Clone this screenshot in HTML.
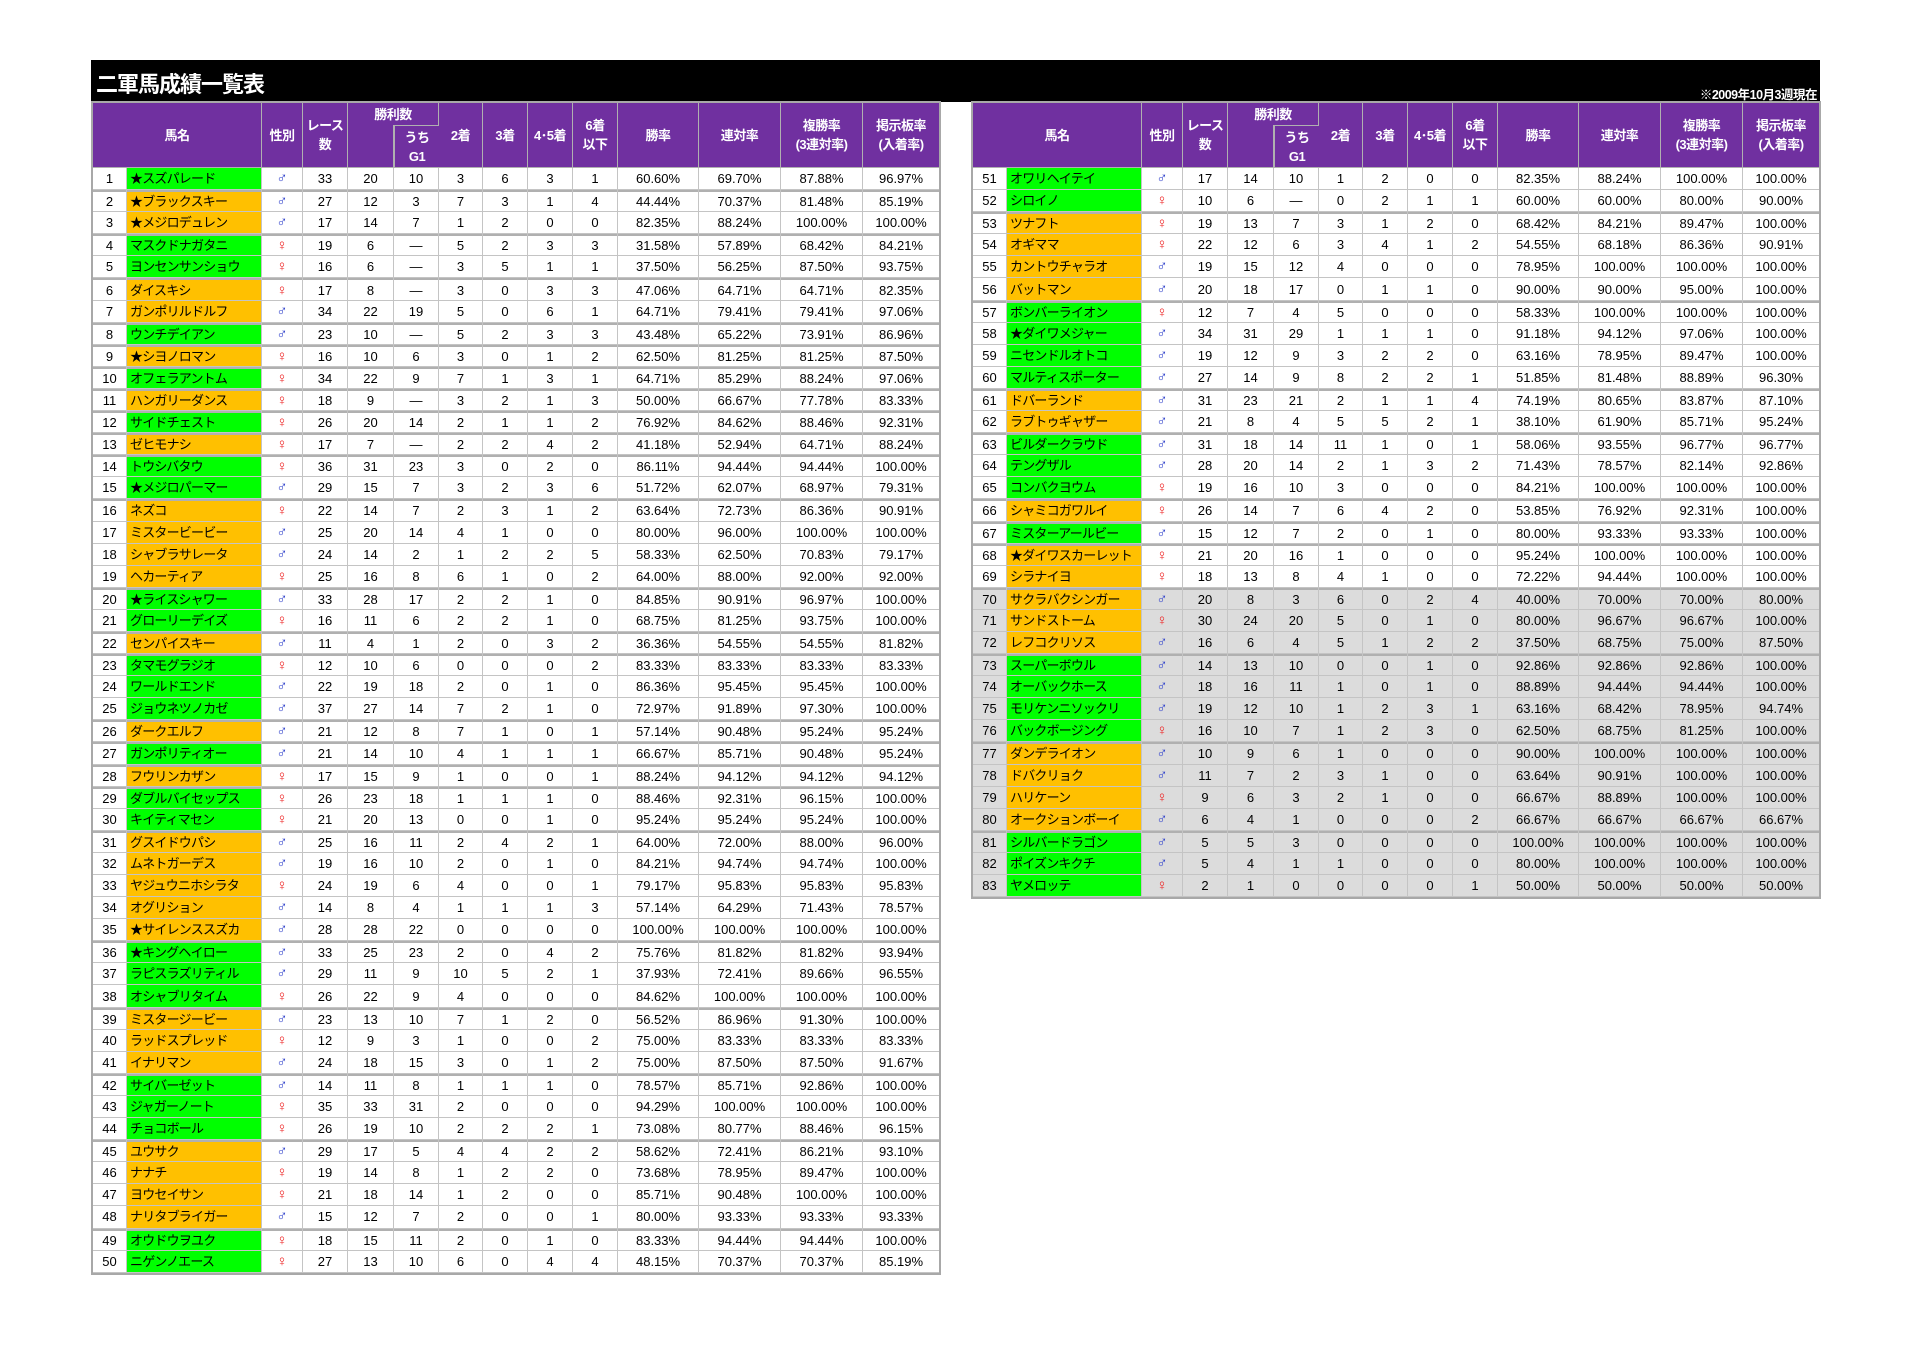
<!DOCTYPE html>
<html><head><meta charset="utf-8">
<style>
body{margin:0;width:1913px;height:1352px;background:#fff;position:relative;font-family:"Liberation Sans","Noto Sans CJK JP",sans-serif;overflow:hidden}
#bar{position:absolute;left:91px;top:60px;width:1729px;height:42px;background:#000}
#title{position:absolute;left:96px;top:67px;color:#fff;font-size:22px;font-weight:bold;letter-spacing:-1px}
#date{position:absolute;right:96px;top:84px;color:#fff;font-size:12.5px;font-weight:bold;letter-spacing:-0.5px}
table{position:absolute;top:101px;border-collapse:separate;border-spacing:0;table-layout:fixed;width:850px;font-size:13px;border:2px solid #a8a8a8}
td{border-right:1px solid #c4c4c4;border-bottom:1px solid #c4c4c4;text-align:center;padding:0;white-space:nowrap;overflow:hidden;box-sizing:border-box;height:22.1px;line-height:17px}
td:last-child{border-right:none}
thead td{background:#7030a0;color:#fff;font-weight:bold;font-size:13px;line-height:19px;border-color:#b0b0b0;letter-spacing:-0.5px;height:22px}
thead tr.b td{height:43px}
tbody tr.t td{box-shadow:inset 0 2px 0 #b0b0b0;padding-top:2px}
td.n{text-align:left;padding-left:3px;font-size:13px;letter-spacing:-0.8px}
.g{background:#00ff00}.o{background:#ffc000}
.m{color:#3344cc;font-size:15px}.f{color:#ee2222;font-size:15px}
tr.z td{background:#dcdcdc}tr.z td.g{background:#00ff00}tr.z td.o{background:#ffc000}
</style></head><body>
<div id="bar"></div>
<div id="title">二軍馬成績一覧表</div>
<div id="date">※2009年10月3週現在</div>

<table style="left:91px">
<colgroup><col style="width:34px"><col style="width:135px"><col style="width:41px"><col style="width:45px"><col style="width:46px"><col style="width:45px"><col style="width:44px"><col style="width:45px"><col style="width:45px"><col style="width:45px"><col style="width:81px"><col style="width:82px"><col style="width:82px"><col style="width:76px"></colgroup>
<thead>
<tr class="a"><td colspan="2" rowspan="2">馬名</td><td rowspan="2">性別</td><td rowspan="2">レース<br>数</td><td colspan="2" style="border-bottom:none">勝利数</td><td rowspan="2">2着</td><td rowspan="2">3着</td><td rowspan="2">4･5着</td><td rowspan="2">6着<br>以下</td><td rowspan="2">勝率</td><td rowspan="2">連対率</td><td rowspan="2">複勝率<br>(3連対率)</td><td rowspan="2">掲示板率<br>(入着率)</td></tr>
<tr class="b"><td style="border-top:none"></td><td style="border-top:1px solid #b0b0b0;border-left:1px solid #b0b0b0">うち<br>G1</td></tr>
</thead>
<tbody>
<tr><td>1</td><td class="n g">★スズパレード</td><td class="m">♂</td><td>33</td><td>20</td><td>10</td><td>3</td><td>6</td><td>3</td><td>1</td><td>60.60%</td><td>69.70%</td><td>87.88%</td><td>96.97%</td></tr>
<tr class="t"><td>2</td><td class="n o">★ブラックスキー</td><td class="m">♂</td><td>27</td><td>12</td><td>3</td><td>7</td><td>3</td><td>1</td><td>4</td><td>44.44%</td><td>70.37%</td><td>81.48%</td><td>85.19%</td></tr>
<tr><td>3</td><td class="n o">★メジロデュレン</td><td class="m">♂</td><td>17</td><td>14</td><td>7</td><td>1</td><td>2</td><td>0</td><td>0</td><td>82.35%</td><td>88.24%</td><td>100.00%</td><td>100.00%</td></tr>
<tr class="t"><td>4</td><td class="n g">マスクドナガタニ</td><td class="f">♀</td><td>19</td><td>6</td><td>—</td><td>5</td><td>2</td><td>3</td><td>3</td><td>31.58%</td><td>57.89%</td><td>68.42%</td><td>84.21%</td></tr>
<tr><td>5</td><td class="n g">ヨンセンサンショウ</td><td class="f">♀</td><td>16</td><td>6</td><td>—</td><td>3</td><td>5</td><td>1</td><td>1</td><td>37.50%</td><td>56.25%</td><td>87.50%</td><td>93.75%</td></tr>
<tr class="t"><td>6</td><td class="n o">ダイスキシ</td><td class="f">♀</td><td>17</td><td>8</td><td>—</td><td>3</td><td>0</td><td>3</td><td>3</td><td>47.06%</td><td>64.71%</td><td>64.71%</td><td>82.35%</td></tr>
<tr><td>7</td><td class="n o">ガンポリルドルフ</td><td class="m">♂</td><td>34</td><td>22</td><td>19</td><td>5</td><td>0</td><td>6</td><td>1</td><td>64.71%</td><td>79.41%</td><td>79.41%</td><td>97.06%</td></tr>
<tr class="t"><td>8</td><td class="n g">ウンチデイアン</td><td class="m">♂</td><td>23</td><td>10</td><td>—</td><td>5</td><td>2</td><td>3</td><td>3</td><td>43.48%</td><td>65.22%</td><td>73.91%</td><td>86.96%</td></tr>
<tr class="t"><td>9</td><td class="n o">★シヨノロマン</td><td class="f">♀</td><td>16</td><td>10</td><td>6</td><td>3</td><td>0</td><td>1</td><td>2</td><td>62.50%</td><td>81.25%</td><td>81.25%</td><td>87.50%</td></tr>
<tr class="t"><td>10</td><td class="n g">オフェラアントム</td><td class="f">♀</td><td>34</td><td>22</td><td>9</td><td>7</td><td>1</td><td>3</td><td>1</td><td>64.71%</td><td>85.29%</td><td>88.24%</td><td>97.06%</td></tr>
<tr class="t"><td>11</td><td class="n o">ハンガリーダンス</td><td class="f">♀</td><td>18</td><td>9</td><td>—</td><td>3</td><td>2</td><td>1</td><td>3</td><td>50.00%</td><td>66.67%</td><td>77.78%</td><td>83.33%</td></tr>
<tr class="t"><td>12</td><td class="n g">サイドチェスト</td><td class="f">♀</td><td>26</td><td>20</td><td>14</td><td>2</td><td>1</td><td>1</td><td>2</td><td>76.92%</td><td>84.62%</td><td>88.46%</td><td>92.31%</td></tr>
<tr class="t"><td>13</td><td class="n o">ゼヒモナシ</td><td class="f">♀</td><td>17</td><td>7</td><td>—</td><td>2</td><td>2</td><td>4</td><td>2</td><td>41.18%</td><td>52.94%</td><td>64.71%</td><td>88.24%</td></tr>
<tr class="t"><td>14</td><td class="n g">トウシバタウ</td><td class="f">♀</td><td>36</td><td>31</td><td>23</td><td>3</td><td>0</td><td>2</td><td>0</td><td>86.11%</td><td>94.44%</td><td>94.44%</td><td>100.00%</td></tr>
<tr><td>15</td><td class="n g">★メジロパーマー</td><td class="m">♂</td><td>29</td><td>15</td><td>7</td><td>3</td><td>2</td><td>3</td><td>6</td><td>51.72%</td><td>62.07%</td><td>68.97%</td><td>79.31%</td></tr>
<tr class="t"><td>16</td><td class="n o">ネズコ</td><td class="f">♀</td><td>22</td><td>14</td><td>7</td><td>2</td><td>3</td><td>1</td><td>2</td><td>63.64%</td><td>72.73%</td><td>86.36%</td><td>90.91%</td></tr>
<tr><td>17</td><td class="n o">ミスタービービー</td><td class="m">♂</td><td>25</td><td>20</td><td>14</td><td>4</td><td>1</td><td>0</td><td>0</td><td>80.00%</td><td>96.00%</td><td>100.00%</td><td>100.00%</td></tr>
<tr><td>18</td><td class="n o">シャブラサレータ</td><td class="m">♂</td><td>24</td><td>14</td><td>2</td><td>1</td><td>2</td><td>2</td><td>5</td><td>58.33%</td><td>62.50%</td><td>70.83%</td><td>79.17%</td></tr>
<tr><td>19</td><td class="n o">ヘカーティア</td><td class="f">♀</td><td>25</td><td>16</td><td>8</td><td>6</td><td>1</td><td>0</td><td>2</td><td>64.00%</td><td>88.00%</td><td>92.00%</td><td>92.00%</td></tr>
<tr class="t"><td>20</td><td class="n g">★ライスシャワー</td><td class="m">♂</td><td>33</td><td>28</td><td>17</td><td>2</td><td>2</td><td>1</td><td>0</td><td>84.85%</td><td>90.91%</td><td>96.97%</td><td>100.00%</td></tr>
<tr><td>21</td><td class="n g">グローリーデイズ</td><td class="f">♀</td><td>16</td><td>11</td><td>6</td><td>2</td><td>2</td><td>1</td><td>0</td><td>68.75%</td><td>81.25%</td><td>93.75%</td><td>100.00%</td></tr>
<tr class="t"><td>22</td><td class="n o">センパイスキー</td><td class="m">♂</td><td>11</td><td>4</td><td>1</td><td>2</td><td>0</td><td>3</td><td>2</td><td>36.36%</td><td>54.55%</td><td>54.55%</td><td>81.82%</td></tr>
<tr class="t"><td>23</td><td class="n g">タマモグラジオ</td><td class="f">♀</td><td>12</td><td>10</td><td>6</td><td>0</td><td>0</td><td>0</td><td>2</td><td>83.33%</td><td>83.33%</td><td>83.33%</td><td>83.33%</td></tr>
<tr><td>24</td><td class="n g">ワールドエンド</td><td class="m">♂</td><td>22</td><td>19</td><td>18</td><td>2</td><td>0</td><td>1</td><td>0</td><td>86.36%</td><td>95.45%</td><td>95.45%</td><td>100.00%</td></tr>
<tr><td>25</td><td class="n g">ジョウネツノカゼ</td><td class="m">♂</td><td>37</td><td>27</td><td>14</td><td>7</td><td>2</td><td>1</td><td>0</td><td>72.97%</td><td>91.89%</td><td>97.30%</td><td>100.00%</td></tr>
<tr class="t"><td>26</td><td class="n o">ダークエルフ</td><td class="m">♂</td><td>21</td><td>12</td><td>8</td><td>7</td><td>1</td><td>0</td><td>1</td><td>57.14%</td><td>90.48%</td><td>95.24%</td><td>95.24%</td></tr>
<tr class="t"><td>27</td><td class="n g">ガンポリティオー</td><td class="m">♂</td><td>21</td><td>14</td><td>10</td><td>4</td><td>1</td><td>1</td><td>1</td><td>66.67%</td><td>85.71%</td><td>90.48%</td><td>95.24%</td></tr>
<tr class="t"><td>28</td><td class="n o">フウリンカザン</td><td class="f">♀</td><td>17</td><td>15</td><td>9</td><td>1</td><td>0</td><td>0</td><td>1</td><td>88.24%</td><td>94.12%</td><td>94.12%</td><td>94.12%</td></tr>
<tr class="t"><td>29</td><td class="n g">ダブルバイセップス</td><td class="f">♀</td><td>26</td><td>23</td><td>18</td><td>1</td><td>1</td><td>1</td><td>0</td><td>88.46%</td><td>92.31%</td><td>96.15%</td><td>100.00%</td></tr>
<tr><td>30</td><td class="n g">キイティマセン</td><td class="f">♀</td><td>21</td><td>20</td><td>13</td><td>0</td><td>0</td><td>1</td><td>0</td><td>95.24%</td><td>95.24%</td><td>95.24%</td><td>100.00%</td></tr>
<tr class="t"><td>31</td><td class="n o">グスイドウパシ</td><td class="m">♂</td><td>25</td><td>16</td><td>11</td><td>2</td><td>4</td><td>2</td><td>1</td><td>64.00%</td><td>72.00%</td><td>88.00%</td><td>96.00%</td></tr>
<tr><td>32</td><td class="n o">ムネトガーデス</td><td class="m">♂</td><td>19</td><td>16</td><td>10</td><td>2</td><td>0</td><td>1</td><td>0</td><td>84.21%</td><td>94.74%</td><td>94.74%</td><td>100.00%</td></tr>
<tr><td>33</td><td class="n o">ヤジュウニホシラタ</td><td class="f">♀</td><td>24</td><td>19</td><td>6</td><td>4</td><td>0</td><td>0</td><td>1</td><td>79.17%</td><td>95.83%</td><td>95.83%</td><td>95.83%</td></tr>
<tr><td>34</td><td class="n o">オグリション</td><td class="m">♂</td><td>14</td><td>8</td><td>4</td><td>1</td><td>1</td><td>1</td><td>3</td><td>57.14%</td><td>64.29%</td><td>71.43%</td><td>78.57%</td></tr>
<tr><td>35</td><td class="n o">★サイレンススズカ</td><td class="m">♂</td><td>28</td><td>28</td><td>22</td><td>0</td><td>0</td><td>0</td><td>0</td><td>100.00%</td><td>100.00%</td><td>100.00%</td><td>100.00%</td></tr>
<tr class="t"><td>36</td><td class="n g">★キングヘイロー</td><td class="m">♂</td><td>33</td><td>25</td><td>23</td><td>2</td><td>0</td><td>4</td><td>2</td><td>75.76%</td><td>81.82%</td><td>81.82%</td><td>93.94%</td></tr>
<tr><td>37</td><td class="n g">ラピスラズリティル</td><td class="m">♂</td><td>29</td><td>11</td><td>9</td><td>10</td><td>5</td><td>2</td><td>1</td><td>37.93%</td><td>72.41%</td><td>89.66%</td><td>96.55%</td></tr>
<tr><td>38</td><td class="n g">オシャブリタイム</td><td class="f">♀</td><td>26</td><td>22</td><td>9</td><td>4</td><td>0</td><td>0</td><td>0</td><td>84.62%</td><td>100.00%</td><td>100.00%</td><td>100.00%</td></tr>
<tr class="t"><td>39</td><td class="n o">ミスタージービー</td><td class="m">♂</td><td>23</td><td>13</td><td>10</td><td>7</td><td>1</td><td>2</td><td>0</td><td>56.52%</td><td>86.96%</td><td>91.30%</td><td>100.00%</td></tr>
<tr><td>40</td><td class="n o">ラッドスプレッド</td><td class="f">♀</td><td>12</td><td>9</td><td>3</td><td>1</td><td>0</td><td>0</td><td>2</td><td>75.00%</td><td>83.33%</td><td>83.33%</td><td>83.33%</td></tr>
<tr><td>41</td><td class="n o">イナリマン</td><td class="m">♂</td><td>24</td><td>18</td><td>15</td><td>3</td><td>0</td><td>1</td><td>2</td><td>75.00%</td><td>87.50%</td><td>87.50%</td><td>91.67%</td></tr>
<tr class="t"><td>42</td><td class="n g">サイバーゼット</td><td class="m">♂</td><td>14</td><td>11</td><td>8</td><td>1</td><td>1</td><td>1</td><td>0</td><td>78.57%</td><td>85.71%</td><td>92.86%</td><td>100.00%</td></tr>
<tr><td>43</td><td class="n g">ジャガーノート</td><td class="f">♀</td><td>35</td><td>33</td><td>31</td><td>2</td><td>0</td><td>0</td><td>0</td><td>94.29%</td><td>100.00%</td><td>100.00%</td><td>100.00%</td></tr>
<tr><td>44</td><td class="n g">チョコボール</td><td class="f">♀</td><td>26</td><td>19</td><td>10</td><td>2</td><td>2</td><td>2</td><td>1</td><td>73.08%</td><td>80.77%</td><td>88.46%</td><td>96.15%</td></tr>
<tr class="t"><td>45</td><td class="n o">ユウサク</td><td class="m">♂</td><td>29</td><td>17</td><td>5</td><td>4</td><td>4</td><td>2</td><td>2</td><td>58.62%</td><td>72.41%</td><td>86.21%</td><td>93.10%</td></tr>
<tr><td>46</td><td class="n o">ナナチ</td><td class="f">♀</td><td>19</td><td>14</td><td>8</td><td>1</td><td>2</td><td>2</td><td>0</td><td>73.68%</td><td>78.95%</td><td>89.47%</td><td>100.00%</td></tr>
<tr><td>47</td><td class="n o">ヨウセイサン</td><td class="f">♀</td><td>21</td><td>18</td><td>14</td><td>1</td><td>2</td><td>0</td><td>0</td><td>85.71%</td><td>90.48%</td><td>100.00%</td><td>100.00%</td></tr>
<tr><td>48</td><td class="n o">ナリタブライガー</td><td class="m">♂</td><td>15</td><td>12</td><td>7</td><td>2</td><td>0</td><td>0</td><td>1</td><td>80.00%</td><td>93.33%</td><td>93.33%</td><td>93.33%</td></tr>
<tr class="t"><td>49</td><td class="n g">オウドウヲユク</td><td class="f">♀</td><td>18</td><td>15</td><td>11</td><td>2</td><td>0</td><td>1</td><td>0</td><td>83.33%</td><td>94.44%</td><td>94.44%</td><td>100.00%</td></tr>
<tr><td>50</td><td class="n g">ニゲンノエース</td><td class="f">♀</td><td>27</td><td>13</td><td>10</td><td>6</td><td>0</td><td>4</td><td>4</td><td>48.15%</td><td>70.37%</td><td>70.37%</td><td>85.19%</td></tr>
</tbody></table>

<table style="left:971px">
<colgroup><col style="width:34px"><col style="width:135px"><col style="width:41px"><col style="width:45px"><col style="width:46px"><col style="width:45px"><col style="width:44px"><col style="width:45px"><col style="width:45px"><col style="width:45px"><col style="width:81px"><col style="width:82px"><col style="width:82px"><col style="width:76px"></colgroup>
<thead>
<tr class="a"><td colspan="2" rowspan="2">馬名</td><td rowspan="2">性別</td><td rowspan="2">レース<br>数</td><td colspan="2" style="border-bottom:none">勝利数</td><td rowspan="2">2着</td><td rowspan="2">3着</td><td rowspan="2">4･5着</td><td rowspan="2">6着<br>以下</td><td rowspan="2">勝率</td><td rowspan="2">連対率</td><td rowspan="2">複勝率<br>(3連対率)</td><td rowspan="2">掲示板率<br>(入着率)</td></tr>
<tr class="b"><td style="border-top:none"></td><td style="border-top:1px solid #b0b0b0;border-left:1px solid #b0b0b0">うち<br>G1</td></tr>
</thead>
<tbody>
<tr><td>51</td><td class="n g">オワリヘイテイ</td><td class="m">♂</td><td>17</td><td>14</td><td>10</td><td>1</td><td>2</td><td>0</td><td>0</td><td>82.35%</td><td>88.24%</td><td>100.00%</td><td>100.00%</td></tr>
<tr><td>52</td><td class="n g">シロイノ</td><td class="f">♀</td><td>10</td><td>6</td><td>—</td><td>0</td><td>2</td><td>1</td><td>1</td><td>60.00%</td><td>60.00%</td><td>80.00%</td><td>90.00%</td></tr>
<tr class="t"><td>53</td><td class="n o">ツナフト</td><td class="f">♀</td><td>19</td><td>13</td><td>7</td><td>3</td><td>1</td><td>2</td><td>0</td><td>68.42%</td><td>84.21%</td><td>89.47%</td><td>100.00%</td></tr>
<tr><td>54</td><td class="n o">オギママ</td><td class="f">♀</td><td>22</td><td>12</td><td>6</td><td>3</td><td>4</td><td>1</td><td>2</td><td>54.55%</td><td>68.18%</td><td>86.36%</td><td>90.91%</td></tr>
<tr><td>55</td><td class="n o">カントウチャラオ</td><td class="m">♂</td><td>19</td><td>15</td><td>12</td><td>4</td><td>0</td><td>0</td><td>0</td><td>78.95%</td><td>100.00%</td><td>100.00%</td><td>100.00%</td></tr>
<tr><td>56</td><td class="n o">バットマン</td><td class="m">♂</td><td>20</td><td>18</td><td>17</td><td>0</td><td>1</td><td>1</td><td>0</td><td>90.00%</td><td>90.00%</td><td>95.00%</td><td>100.00%</td></tr>
<tr class="t"><td>57</td><td class="n g">ボンバーライオン</td><td class="f">♀</td><td>12</td><td>7</td><td>4</td><td>5</td><td>0</td><td>0</td><td>0</td><td>58.33%</td><td>100.00%</td><td>100.00%</td><td>100.00%</td></tr>
<tr><td>58</td><td class="n g">★ダイワメジャー</td><td class="m">♂</td><td>34</td><td>31</td><td>29</td><td>1</td><td>1</td><td>1</td><td>0</td><td>91.18%</td><td>94.12%</td><td>97.06%</td><td>100.00%</td></tr>
<tr><td>59</td><td class="n g">ニセンドルオトコ</td><td class="m">♂</td><td>19</td><td>12</td><td>9</td><td>3</td><td>2</td><td>2</td><td>0</td><td>63.16%</td><td>78.95%</td><td>89.47%</td><td>100.00%</td></tr>
<tr><td>60</td><td class="n g">マルティスポーター</td><td class="m">♂</td><td>27</td><td>14</td><td>9</td><td>8</td><td>2</td><td>2</td><td>1</td><td>51.85%</td><td>81.48%</td><td>88.89%</td><td>96.30%</td></tr>
<tr class="t"><td>61</td><td class="n o">ドバーランド</td><td class="m">♂</td><td>31</td><td>23</td><td>21</td><td>2</td><td>1</td><td>1</td><td>4</td><td>74.19%</td><td>80.65%</td><td>83.87%</td><td>87.10%</td></tr>
<tr><td>62</td><td class="n o">ラブトゥギャザー</td><td class="m">♂</td><td>21</td><td>8</td><td>4</td><td>5</td><td>5</td><td>2</td><td>1</td><td>38.10%</td><td>61.90%</td><td>85.71%</td><td>95.24%</td></tr>
<tr class="t"><td>63</td><td class="n g">ビルダークラウド</td><td class="m">♂</td><td>31</td><td>18</td><td>14</td><td>11</td><td>1</td><td>0</td><td>1</td><td>58.06%</td><td>93.55%</td><td>96.77%</td><td>96.77%</td></tr>
<tr><td>64</td><td class="n g">テングザル</td><td class="m">♂</td><td>28</td><td>20</td><td>14</td><td>2</td><td>1</td><td>3</td><td>2</td><td>71.43%</td><td>78.57%</td><td>82.14%</td><td>92.86%</td></tr>
<tr><td>65</td><td class="n g">コンバクヨウム</td><td class="f">♀</td><td>19</td><td>16</td><td>10</td><td>3</td><td>0</td><td>0</td><td>0</td><td>84.21%</td><td>100.00%</td><td>100.00%</td><td>100.00%</td></tr>
<tr class="t"><td>66</td><td class="n o">シャミコガワルイ</td><td class="f">♀</td><td>26</td><td>14</td><td>7</td><td>6</td><td>4</td><td>2</td><td>0</td><td>53.85%</td><td>76.92%</td><td>92.31%</td><td>100.00%</td></tr>
<tr class="t"><td>67</td><td class="n g">ミスターアールビー</td><td class="m">♂</td><td>15</td><td>12</td><td>7</td><td>2</td><td>0</td><td>1</td><td>0</td><td>80.00%</td><td>93.33%</td><td>93.33%</td><td>100.00%</td></tr>
<tr class="t"><td>68</td><td class="n o">★ダイワスカーレット</td><td class="f">♀</td><td>21</td><td>20</td><td>16</td><td>1</td><td>0</td><td>0</td><td>0</td><td>95.24%</td><td>100.00%</td><td>100.00%</td><td>100.00%</td></tr>
<tr><td>69</td><td class="n o">シラナイヨ</td><td class="f">♀</td><td>18</td><td>13</td><td>8</td><td>4</td><td>1</td><td>0</td><td>0</td><td>72.22%</td><td>94.44%</td><td>100.00%</td><td>100.00%</td></tr>
<tr class="z t"><td>70</td><td class="n o">サクラバクシンガー</td><td class="m">♂</td><td>20</td><td>8</td><td>3</td><td>6</td><td>0</td><td>2</td><td>4</td><td>40.00%</td><td>70.00%</td><td>70.00%</td><td>80.00%</td></tr>
<tr class="z"><td>71</td><td class="n o">サンドストーム</td><td class="f">♀</td><td>30</td><td>24</td><td>20</td><td>5</td><td>0</td><td>1</td><td>0</td><td>80.00%</td><td>96.67%</td><td>96.67%</td><td>100.00%</td></tr>
<tr class="z"><td>72</td><td class="n o">レフコクリソス</td><td class="m">♂</td><td>16</td><td>6</td><td>4</td><td>5</td><td>1</td><td>2</td><td>2</td><td>37.50%</td><td>68.75%</td><td>75.00%</td><td>87.50%</td></tr>
<tr class="z t"><td>73</td><td class="n g">スーパーボウル</td><td class="m">♂</td><td>14</td><td>13</td><td>10</td><td>0</td><td>0</td><td>1</td><td>0</td><td>92.86%</td><td>92.86%</td><td>92.86%</td><td>100.00%</td></tr>
<tr class="z"><td>74</td><td class="n g">オーバックホース</td><td class="m">♂</td><td>18</td><td>16</td><td>11</td><td>1</td><td>0</td><td>1</td><td>0</td><td>88.89%</td><td>94.44%</td><td>94.44%</td><td>100.00%</td></tr>
<tr class="z"><td>75</td><td class="n g">モリケンニソックリ</td><td class="m">♂</td><td>19</td><td>12</td><td>10</td><td>1</td><td>2</td><td>3</td><td>1</td><td>63.16%</td><td>68.42%</td><td>78.95%</td><td>94.74%</td></tr>
<tr class="z"><td>76</td><td class="n g">バックボージング</td><td class="f">♀</td><td>16</td><td>10</td><td>7</td><td>1</td><td>2</td><td>3</td><td>0</td><td>62.50%</td><td>68.75%</td><td>81.25%</td><td>100.00%</td></tr>
<tr class="z t"><td>77</td><td class="n o">ダンデライオン</td><td class="m">♂</td><td>10</td><td>9</td><td>6</td><td>1</td><td>0</td><td>0</td><td>0</td><td>90.00%</td><td>100.00%</td><td>100.00%</td><td>100.00%</td></tr>
<tr class="z"><td>78</td><td class="n o">ドバクリョク</td><td class="m">♂</td><td>11</td><td>7</td><td>2</td><td>3</td><td>1</td><td>0</td><td>0</td><td>63.64%</td><td>90.91%</td><td>100.00%</td><td>100.00%</td></tr>
<tr class="z"><td>79</td><td class="n o">ハリケーン</td><td class="f">♀</td><td>9</td><td>6</td><td>3</td><td>2</td><td>1</td><td>0</td><td>0</td><td>66.67%</td><td>88.89%</td><td>100.00%</td><td>100.00%</td></tr>
<tr class="z"><td>80</td><td class="n o">オークションボーイ</td><td class="m">♂</td><td>6</td><td>4</td><td>1</td><td>0</td><td>0</td><td>0</td><td>2</td><td>66.67%</td><td>66.67%</td><td>66.67%</td><td>66.67%</td></tr>
<tr class="z t"><td>81</td><td class="n g">シルバードラゴン</td><td class="m">♂</td><td>5</td><td>5</td><td>3</td><td>0</td><td>0</td><td>0</td><td>0</td><td>100.00%</td><td>100.00%</td><td>100.00%</td><td>100.00%</td></tr>
<tr class="z"><td>82</td><td class="n g">ポイズンキクチ</td><td class="m">♂</td><td>5</td><td>4</td><td>1</td><td>1</td><td>0</td><td>0</td><td>0</td><td>80.00%</td><td>100.00%</td><td>100.00%</td><td>100.00%</td></tr>
<tr class="z"><td>83</td><td class="n g">ヤメロッテ</td><td class="f">♀</td><td>2</td><td>1</td><td>0</td><td>0</td><td>0</td><td>0</td><td>1</td><td>50.00%</td><td>50.00%</td><td>50.00%</td><td>50.00%</td></tr>
</tbody></table>
</body></html>
